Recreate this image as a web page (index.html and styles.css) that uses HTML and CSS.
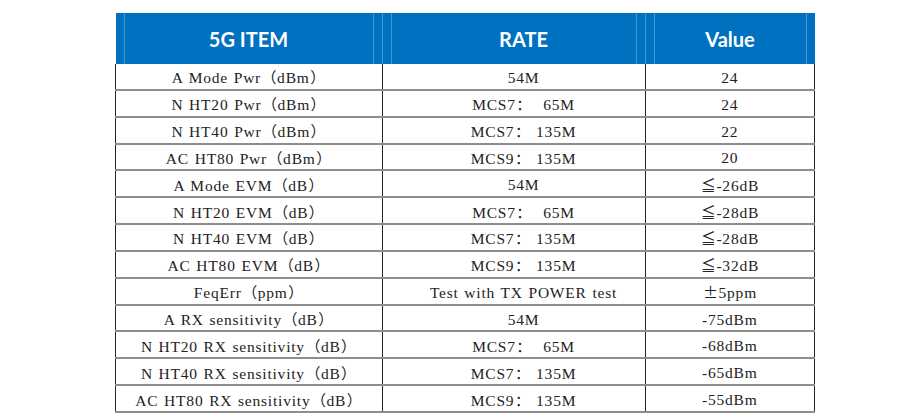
FILE: index.html
```html
<!DOCTYPE html>
<html>
<head>
<meta charset="utf-8">
<link rel="stylesheet" href="styles.css">
</head>
<body>
<div class="page">
  <table class="spec">
    <thead>
      <tr>
        <th class="c1"><div class="hin">5G ITEM</div></th>
        <th class="c2"><div class="hin"><span class="shift">RATE</span></div></th>
        <th class="c3"><div class="hin">Value</div></th>
      </tr>
    </thead>
    <tbody>
      <tr><td>A Mode Pwr<span class="fw">（</span>dBm<span class="fw">）</span></td><td class="c2">54M</td><td>24</td></tr>
      <tr><td>N HT20 Pwr<span class="fw">（</span>dBm<span class="fw">）</span></td><td class="c2">MCS7<span class="fw">：</span>  65M</td><td>24</td></tr>
      <tr><td>N HT40 Pwr<span class="fw">（</span>dBm<span class="fw">）</span></td><td class="c2">MCS7<span class="fw">：</span> 135M</td><td>22</td></tr>
      <tr><td>AC HT80 Pwr<span class="fw">（</span>dBm<span class="fw">）</span></td><td class="c2">MCS9<span class="fw">：</span> 135M</td><td>20</td></tr>
      <tr><td>A Mode EVM<span class="fw">（</span>dB<span class="fw">）</span></td><td class="c2">54M</td><td><span class="fw">≦</span>-26dB</td></tr>
      <tr><td>N HT20 EVM<span class="fw">（</span>dB<span class="fw">）</span></td><td class="c2">MCS7<span class="fw">：</span>  65M</td><td><span class="fw">≦</span>-28dB</td></tr>
      <tr><td>N HT40 EVM<span class="fw">（</span>dB<span class="fw">）</span></td><td class="c2">MCS7<span class="fw">：</span> 135M</td><td><span class="fw">≦</span>-28dB</td></tr>
      <tr><td>AC HT80 EVM<span class="fw">（</span>dB<span class="fw">）</span></td><td class="c2">MCS9<span class="fw">：</span> 135M</td><td><span class="fw">≦</span>-32dB</td></tr>
      <tr><td>FeqErr<span class="fw">（</span>ppm<span class="fw">）</span></td><td class="c2">Test with TX POWER test</td><td><span class="fw">±</span>5ppm</td></tr>
      <tr><td>A RX sensitivity<span class="fw">（</span>dB<span class="fw">）</span></td><td class="c2">54M</td><td>-75dBm</td></tr>
      <tr><td>N HT20 RX sensitivity<span class="fw">（</span>dB<span class="fw">）</span></td><td class="c2">MCS7<span class="fw">：</span>  65M</td><td>-68dBm</td></tr>
      <tr><td>N HT40 RX sensitivity<span class="fw">（</span>dB<span class="fw">）</span></td><td class="c2">MCS7<span class="fw">：</span> 135M</td><td>-65dBm</td></tr>
      <tr><td>AC HT80 RX sensitivity<span class="fw">（</span>dB<span class="fw">）</span></td><td class="c2">MCS9<span class="fw">：</span> 135M</td><td>-55dBm</td></tr>
    </tbody>
  </table>
</div>
</body>
</html>
```

FILE: styles.css
```css
html, body {
  margin: 0;
  padding: 0;
  background: #ffffff;
}

.page {
  padding: 13px 0 0 115px;
}

.spec {
  border-collapse: collapse;
  table-layout: fixed;
  width: 697px;
}

.spec th {
  background: #0070c0;
  color: #ffffff;
  font-family: Lato, "Open Sans", sans-serif;
  font-weight: 700;
  font-size: 20px;
  height: 51px;
  padding: 0;
  text-align: center;
  vertical-align: middle;
}

.spec th.c1 { width: 266px; }
.spec th.c2 { width: 262px; border-left: 1px solid #3f95d6; border-right: 1px solid #3f95d6; }
.spec th.c3 { width: 169px; }

.hin {
  height: 51px;
  margin: 0 8px;
  border-left: 1px solid #3f95d6;
  border-right: 1px solid #3f95d6;
  display: flex;
  align-items: center;
  justify-content: center;
}

.shift {
  padding-left: 20px;
}

.spec td {
  font-family: "Liberation Serif", "Noto Sans CJK SC", serif;
  font-size: 15.5px;
  letter-spacing: 0.8px;
  word-spacing: 1px;
  color: #222222;
  height: 22.85px;
  padding: 3px 0 0 0;
  text-align: center;
  vertical-align: middle;
  white-space: pre;
  border-left: 1px solid #262626;
  border-right: 1px solid #262626;
  border-bottom: 2px solid #8e8e8e;
  line-height: 20px;
}

.spec tbody tr td {
  height: 21.85px;
}

.spec td.c2 {
  padding-left: 20px;
}

.fw {
  font-family: "Noto Sans CJK SC", sans-serif;
  font-size: 15px;
  letter-spacing: 0;
  display: inline-block;
  width: 16px;
  text-align: center;
}
```
